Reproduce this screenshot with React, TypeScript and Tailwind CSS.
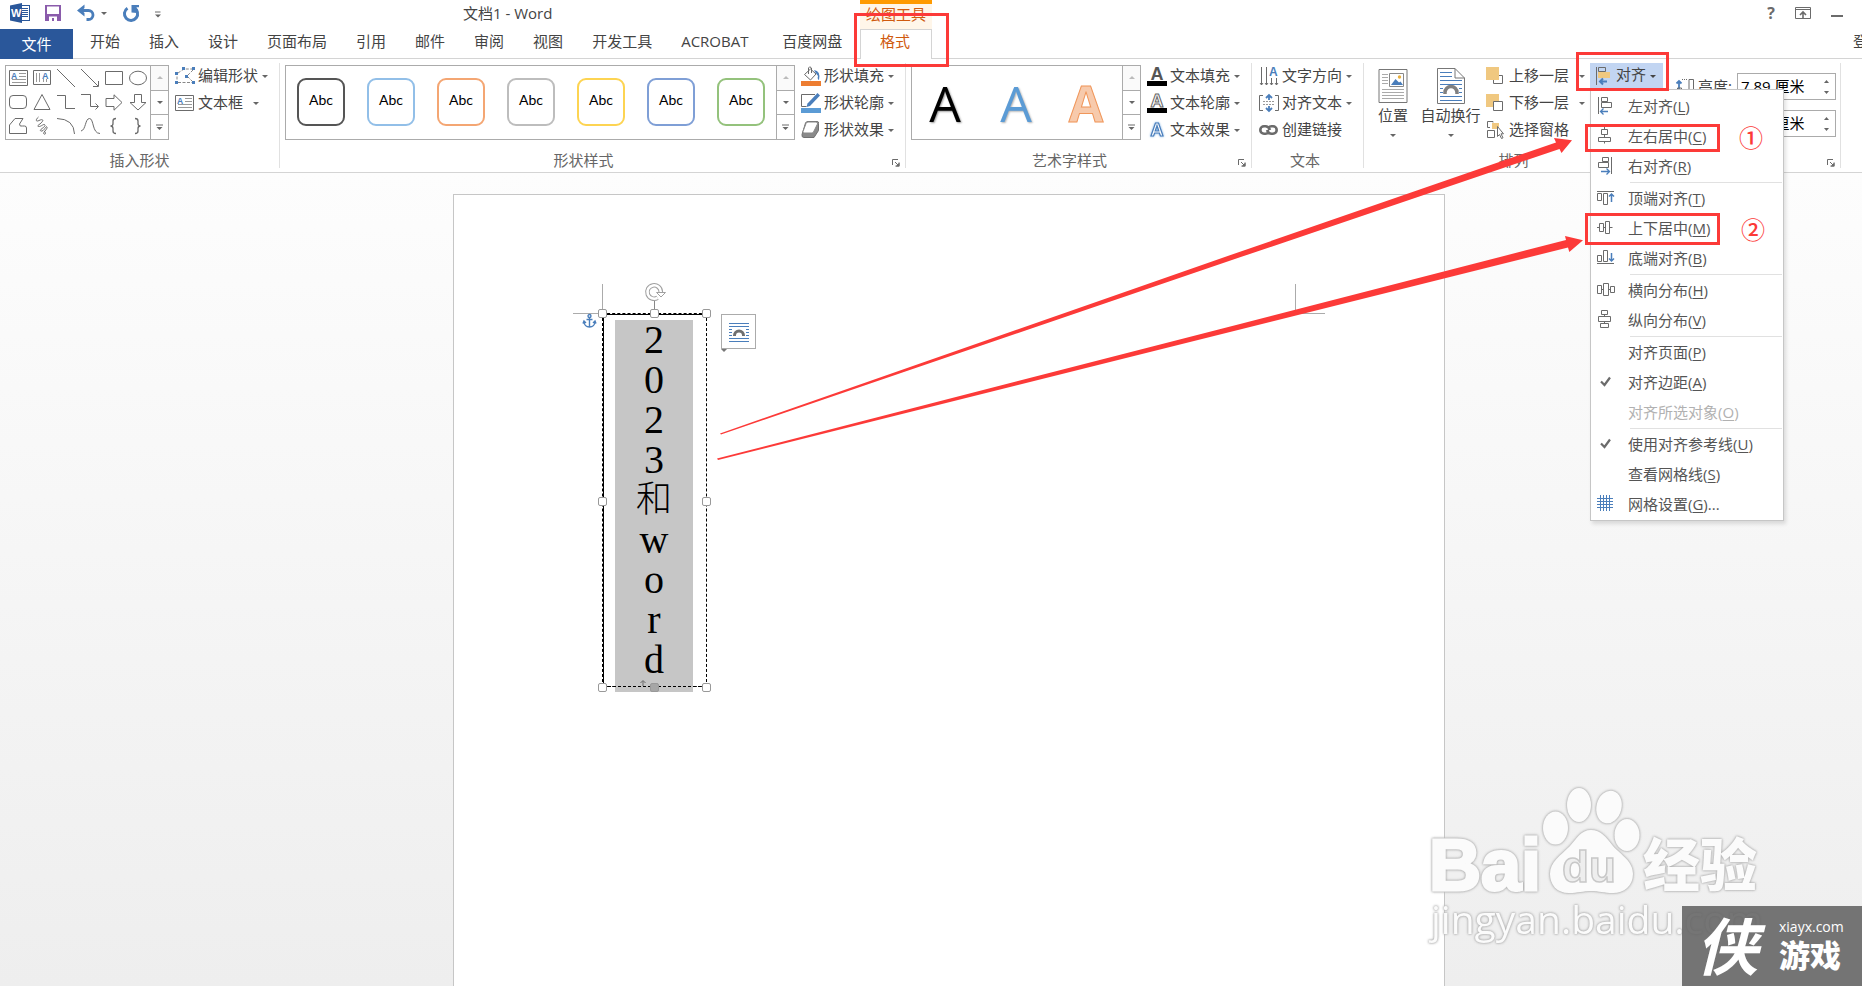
import React from "react";

type Kids = { children?: React.ReactNode };

const BLUE = "#4a7ebb";
const GREY = "#777";

function Icon({ w = 20, h = 20, children }: Kids & { w?: number; h?: number }) {
  return (
    <svg width={w} height={h} viewBox={`0 0 ${w} ${h}`} fill="none" stroke="#6b6b6b" strokeWidth="1" className="shrink-0 overflow-visible" aria-hidden="true">
      {children}
    </svg>
  );
}

function Caret({ color = "#666" }: { color?: string }) {
  return (
    <Icon w={6} h={3}>
      <path d="M0 0h6l-3 3z" fill={color} stroke="none" />
    </Icon>
  );
}

/* ---------- title bar and tabs ---------- */

function TitleBar() {
  return (
    <header className="flex h-[29px] shrink-0">
      <div className="flex w-[463px] shrink-0 items-center pb-[3px] pl-[10px]">
        <Icon w={20} h={20}>
          <rect x="10" y="2.5" width="9.5" height="15" fill="#fff" stroke="#2a579a" />
          <path d="M12 5.5h6M12 7.5h6M12 9.5h6M12 11.5h6M12 13.5h6" stroke="#2a579a" />
          <path d="M0 2.5L12 0v20L0 17.5z" fill="#2a579a" stroke="none" />
          <text x="1" y="14" fontSize="11" fontWeight="700" fontFamily="Liberation Sans, sans-serif" fill="#fff" stroke="none">W</text>
        </Icon>
        <button type="button" aria-label="保存" className="ml-[15px] flex">
          <Icon w={16} h={16}>
            <path d="M0 0h16v16H0z" fill="#8a5bab" stroke="none" />
            <path d="M2 1.5h12V9H2zM4 11.5h8V16H4z" fill="#fff" stroke="none" />
            <path d="M7 13h2v3H7z" fill="#8a5bab" stroke="none" />
          </Icon>
        </button>
        <button type="button" aria-label="撤消" className="ml-[16px] flex items-center gap-[6px]">
          <Icon w={18} h={16}>
            <path d="M3 5.500h8.500a4.500 4.500 0 0 1 0 9H9.500" stroke={BLUE} strokeWidth="2.800" />
            <path d="M7.500 -.5v3.500L5 5.500l2.500 2.500v3.500L0 5.500z" fill={BLUE} stroke="none" />
          </Icon>
          <Caret />
        </button>
        <button type="button" aria-label="重复" className="ml-[16px] flex">
          <Icon w={16} h={17}>
            <path d="M11 2.9A6.6 6.6 0 1 1 4.5 3.2" stroke={BLUE} strokeWidth="3" />
            <path d="M8.5 0H16v2.2h-2.4L14 8 8.5 7.4z" fill={BLUE} stroke="none" />
          </Icon>
        </button>
        <button type="button" aria-label="自定义快速访问工具栏" className="ml-[16px] flex pt-[3px]">
          <Icon w={6} h={7}>
            <path d="M0 1h5.5" />
            <path d="M0 3.5h6l-3 3z" fill="#666" stroke="none" />
          </Icon>
        </button>
      </div>
      <h1 className="w-[397px] shrink-0 whitespace-pre text-[15px] leading-[27px]">文档1 - Word</h1>
      <div className="w-[72px] shrink-0 border-t-4 border-[#ff9a00] bg-[#fff6e9] text-center text-[15px] leading-[20px] text-[#d05a0e]">绘图工具</div>
      <div className="ml-auto flex shrink-0 items-center gap-[20px] pb-[3px] pr-[19px]">
        <button type="button" aria-label="帮助" className="text-[16px] font-bold leading-none text-[#6b6b6b]">?</button>
        <button type="button" aria-label="功能区显示选项" className="flex">
          <Icon w={16} h={12}>
            <path d="M.5.5h15v11H.5zM0 2.5h16" />
            <path d="M8 11V5.500M5 8l3-3 3 3" strokeWidth="1.6" />
          </Icon>
        </button>
        <button type="button" aria-label="最小化" className="flex pt-[5px]">
          <Icon w={12} h={2}><path d="M0 1h12" strokeWidth="2" /></Icon>
        </button>
      </div>
    </header>
  );
}

const tabs = ["开始", "插入", "设计", "页面布局", "引用", "邮件", "审阅", "视图", "开发工具", "ACROBAT", "百度网盘"];

function TabBar() {
  return (
    <nav className="flex h-[30px] shrink-0 text-[15px] leading-[24px]">
      <div className="flex w-[860px] shrink-0 border-b border-[#d4d4d4]">
        <button type="button" className="mb-[-1px] w-[73px] shrink-0 bg-[#2a579a] text-white">文件</button>
        <div className="flex items-start gap-[29px] pl-[17px]">
          {tabs.map((t) => (
            <button type="button" key={t} className={`whitespace-nowrap text-left ${t === "ACROBAT" ? "w-[72px]" : ""}`}>{t}</button>
          ))}
        </div>
      </div>
      <button type="button" className="flex w-[72px] shrink-0 justify-center border-x border-t border-[#d4d4d4] bg-white pr-[2px] leading-[22px] text-[#d05a0e]">格式</button>
      <div className="flex flex-1 items-start justify-end overflow-hidden border-b border-[#d4d4d4]">
        <button type="button" className="w-[9px] overflow-hidden whitespace-nowrap text-left">登录</button>
      </div>
    </nav>
  );
}

/* ---------- ribbon ---------- */

function Group({ label, launcher, width, children }: Kids & { label: string; launcher?: boolean; width: string }) {
  return (
    <section className={`flex h-[105px] shrink-0 flex-col border-r border-[#e1e1e1] ${width}`} aria-label={label}>
      <div className="flex h-[88px] items-start">{children}</div>
      <div className="flex h-[17px] text-[15px] leading-[18px] text-[#666]">
        <span className="flex-1 pr-[5px] text-center">{label}</span>
        {launcher && (
          <button type="button" aria-label={`${label}选项`} className="flex w-[18px] items-center justify-center pt-[6px]">
            <Icon w={8} h={8}>
              <path d="M.5 6V.5H6M3 3l3.5 3.5M7 3.5V7H3.5" />
              <path d="M7.5 3.5v4h-4z" fill="#6b6b6b" stroke="none" />
            </Icon>
          </button>
        )}
      </div>
    </section>
  );
}

function Scroller() {
  return (
    <div className="flex w-[18px] shrink-0 flex-col border-l border-[#ababab]">
      <button type="button" aria-label="上一行" className="flex flex-1 items-center justify-center bg-[#fafafa]">
        <Icon w={6} h={3}><path d="M0 3h6L3 0z" fill="#bbb" stroke="none" /></Icon>
      </button>
      <button type="button" aria-label="下一行" className="flex flex-1 items-center justify-center border-y border-[#ababab]"><Caret /></button>
      <button type="button" aria-label="其他" className="flex flex-1 items-center justify-center">
        <Icon w={7} h={7}>
          <path d="M0 1h7" />
          <path d="M.5 3h6l-3 3z" fill="#666" stroke="none" />
        </Icon>
      </button>
    </div>
  );
}

function Gallery({ children, width }: Kids & { width: string }) {
  return (
    <div className={`mt-[2px] flex h-[75px] shrink-0 border border-[#ababab] bg-white ${width}`}>
      <div className="flex-1">{children}</div>
      <Scroller />
    </div>
  );
}

function Small({ icon, label, caret = true, gap = "ml-[4px]" }: { icon: React.ReactNode; label: string; caret?: boolean; gap?: string }) {
  return (
    <button type="button" className="flex h-[27px] items-center whitespace-nowrap pb-px text-[15px] leading-[20px]">
      <span className="mr-[3px] flex w-[20px] items-center">{icon}</span>
      <span className="pb-[3px]">{label}</span>
      {caret && <span className={`flex ${gap}`}><Caret /></span>}
    </button>
  );
}

const textBoxIcon = (
  <Icon w={19} h={16}>
    <path d="M.5.5h18v15H.5z" />
    <path d="M10 3.5h7M10 6.5h7M3 9.5h14M3 12.5h14" stroke="#999" />
    <text x="2" y="8.5" fontSize="8.5" fontWeight="700" fontFamily="Liberation Sans, sans-serif" fill={BLUE} stroke="none">A</text>
  </Icon>
);

const shapes: { name: string; art: React.ReactNode }[] = [
  { name: "文本框", art: textBoxIcon },
  {
    name: "竖排文本框",
    art: (
      <Icon w={18} h={16}>
        <path d="M.5.5h17v14H.5z" />
        <path d="M3.5 3v9M6.5 3v9M10.5 9v3M13.5 9v3" stroke="#999" />
        <text x="9" y="8.5" fontSize="9" fontWeight="700" fontFamily="Liberation Sans, sans-serif" fill={BLUE} stroke="none">A</text>
      </Icon>
    ),
  },
  { name: "直线", art: <Icon w={18} h={18}><path d="M0 0l18 18" /></Icon> },
  { name: "箭头", art: <Icon w={18} h={18}><path d="M0 0l17 17M17.500 12v5.500H12" /></Icon> },
  { name: "矩形", art: <Icon w={18} h={14}><path d="M.5.5h17v13H.5z" /></Icon> },
  { name: "椭圆", art: <Icon w={18} h={14}><ellipse cx="9" cy="7" rx="8.5" ry="6.8" /></Icon> },
  { name: "圆角矩形", art: <Icon w={18} h={14}><rect x=".5" y=".5" width="17" height="13" rx="3.5" /></Icon> },
  { name: "三角形", art: <Icon w={18} h={16}><path d="M9 .5l8 15H1z" /></Icon> },
  { name: "肘形连接符", art: <Icon w={18} h={14}><path d="M0 .5h8.500v13H18" /></Icon> },
  { name: "肘形箭头", art: <Icon w={18} h={16}><path d="M0 .5h9.500v12H17M14.500 9.500l3 3-3 3" /></Icon> },
  { name: "右箭头", art: <Icon w={18} h={17}><path d="M1 4.500h8V.8l8 7.700-8 7.700v-3.700H1z" /></Icon> },
  { name: "下箭头", art: <Icon w={18} h={17}><path d="M5.500.5h7v8h4.500L9 16 1 8.500h4.500z" /></Icon> },
  { name: "任意多边形", art: <Icon w={18} h={16}><path d="M.5 7L6 .5h8L10.500 6q0 3 3 2h2q2 0 2 2v5.500H.5z" /></Icon> },
  { name: "自由曲线", art: <Icon w={18} h={18}><path d="M5.500 0C2 3 3 5 6 3.500s5-1 3 1.500-6 4-3.500 4.500S11 6 12 8s-7 5-4 6 5-6 6-4-5 6-3 7 2-2 0-3" /></Icon> },
  { name: "弧形", art: <Icon w={18} h={16}><path d="M0 .5Q17 1 17.500 16" /></Icon> },
  { name: "曲线", art: <Icon w={19} h={16}><path d="M0 13C5 12 4 .5 8.500.5S11 15.500 19 15.500" /></Icon> },
  { name: "左大括号", art: <Icon w={18} h={16}><path d="M11 .5Q8 .5 8 3v2.500Q8 8 5.500 8 8 8 8 10.500V13q0 2.500 3 2.500" strokeWidth="1.300" /></Icon> },
  { name: "右大括号", art: <Icon w={18} h={16}><path d="M6 .5Q9 .5 9 3v2.500Q9 8 11.500 8 9 8 9 10.500V13q0 2.500-3 2.500" strokeWidth="1.300" /></Icon> },
];

const styleBorders = [
  "border-[#555555]",
  "border-[#92bfe8]",
  "border-[#f4a673]",
  "border-[#bdbdbd]",
  "border-[#fdd452]",
  "border-[#7f9fd6]",
  "border-[#94c27c]",
];

const letterA = (fill: string, stroke: string, sw: number) => (
  <text x="10" y="14" textAnchor="middle" fontSize="18" fontWeight="700" fontFamily="Liberation Sans, sans-serif" fill={fill} stroke={stroke} strokeWidth={sw}>A</text>
);

const fillIcon = (
  <Icon>
    <path d="M3.500 8.500L9.500 3l5.500 5-5.500 6z" fill="#fff" />
    <path d="M7.500 8V2Q8.500-.5 10.500 2v5" />
    <path d="M13 4q7 1 5 10-2-1-1-4l-3-4z" fill={BLUE} stroke="none" />
    <path d="M0 15h20v5H0z" fill="#ed7d31" stroke="none" />
  </Icon>
);
const outlineIcon = (
  <Icon>
    <path d="M14 1.500H.5v12h5" />
    <path d="M16.500 0l2.500 2.500L9 13l-3.500 1L6.500 10.500z" fill={BLUE} stroke="none" />
    <path d="M0 15h20v5H0z" fill="#5b9bd5" stroke="none" />
  </Icon>
);
const effectIcon = (
  <Icon w={20} h={18}>
    <path d="M4.500 2Q5 .5 7 .5h9q2 0 1.500 2v7L13 16.500H3q-2.500 0-2-3z" fill="#8a8a8a" stroke="#707070" />
    <path d="M5 2.500Q5.500 1 7 1h8q2 0 1.500 2L12.500 11Q12 12 11 12H3Q1.500 12 2 10.500z" fill="#fff" stroke="#888" />
  </Icon>
);
const textFillIcon = <Icon>{letterA("#555", "none", 0)}<path d="M0 15h20v5H0z" fill="#000" stroke="none" /></Icon>;
const textOutlineIcon = <Icon>{letterA("#fff", "#666", 1)}<path d="M0 15h20v5H0z" fill="#000" stroke="none" /></Icon>;
const textEffectIcon = (
  <Icon>
    <text x="10" y="16" textAnchor="middle" fontSize="18" fontWeight="700" fontFamily="Liberation Sans, sans-serif" fill="#fff" stroke={BLUE} strokeWidth="1.200" className="[filter:drop-shadow(0_0_1px_#7fb2e5)]">A</text>
  </Icon>
);
const directionIcon = (
  <Icon w={19} h={20}>
    <path d="M2.500 1v18M7.500 1v18M12.500 12v7M17.500 12v7M1 17l1.500 2L4 17M6 17l1.500 2L9 17M11 17l1.500 2 1.500-2M16 17l1.500 2 1.500-2" />
    <text x="10" y="10" fontSize="12" fontWeight="700" fontFamily="Liberation Sans, sans-serif" fill={BLUE} stroke="none">A</text>
  </Icon>
);
const alignTextIcon = (
  <Icon w={20} h={18}>
    <path d="M4 1.500H.5v15H4M16 1.500h3.500v15H16" />
    <path d="M4 7.500h12M4 10.500h12" stroke="#999" strokeDasharray="2 1" />
    <path d="M10 1v5M7 4l3-3 3 3M10 12v5M7 14l3 3 3-3" stroke={BLUE} strokeWidth="1.800" />
  </Icon>
);
const linkIcon = (
  <Icon w={19} h={12}>
    <path d="M9.500 8.500Q8.500 9.700 6.500 9.700H5a3.700 3.700 0 0 1 0-7.400h1.500q3 0 4.500 3.700M9.500 3.500Q10.500 2.300 12.500 2.300H14a3.700 3.700 0 0 1 0 7.400h-1.500Q9.500 9.700 8 6" strokeWidth="2.600" />
  </Icon>
);
const editShapeIcon = (
  <Icon w={20} h={18}>
    <path d="M3 6L9 2h9M2 5v10M3 15.500h15M18 3l-6 6 6 6" stroke="#888" strokeDasharray="3 1.500" />
    <path d="M7 0h3v3H7zM17 0h3v3h-3zM0 5h3v3H0zM10 8h3v3h-3zM0 14h3v3H0zM17 14h3v3h-3z" fill={BLUE} stroke="none" />
  </Icon>
);
const forwardIcon = (
  <Icon w={18} h={18}>
    <path d="M12.500 8.500h4v8h-9v-4" />
    <path d="M0 0h13v13H0z" fill="#f0c880" stroke="none" />
  </Icon>
);
const backwardIcon = (
  <Icon w={18} h={18}>
    <path d="M0 0h13v13H0z" fill="#f0c880" stroke="none" />
    <path d="M7.500 7.500h9v9h-9z" fill="#fff" />
  </Icon>
);
const paneIcon = (
  <Icon w={18} h={18}>
    <path d="M6 2h7v6H6z" fill="#f0c880" stroke="none" />
    <path d="M7 1.500V.5H1.500v6H4M1.500 9.500h7v7h-7z" />
    <path d="M11.500 5.500v10l2-2 2 4 1.500-.7-2-4h2.500z" fill="#fff" />
  </Icon>
);

function Big({ icon, label, width }: { icon: React.ReactNode; label: string; width: string }) {
  return (
    <button type="button" className={`flex shrink-0 flex-col items-center pt-[3px] text-[15px] leading-[20px] ${width}`}>
      <span className="flex h-[39px] items-center">{icon}</span>
      <span className="whitespace-nowrap">{label}</span>
      <span className="flex pt-[9px]"><Caret /></span>
    </button>
  );
}

const positionIcon = (
  <Icon w={30} h={34}>
    <path d="M1 .5h28v33H1z" stroke={GREY} />
    <path d="M4 5.500h6M4 8.500h6M4 11.500h6M4 14.500h6M4 20.500h22M4 23.500h22M4 26.500h22M4 29.500h22" stroke="#aaa" />
    <path d="M11.500 4.500h14v13h-14z" stroke="#888" />
    <path d="M13 16l4.500-6 3.500 3.500 1.500-1L25 16z" fill={BLUE} stroke="none" />
    <circle cx="21.500" cy="8" r="1.700" fill="#e8b040" stroke="none" />
  </Icon>
);
const wrapIcon = (
  <Icon w={28} h={36}>
    <path d="M.5.5H18L27.500 10v25.500H.5zM18 .5V10h9.500" stroke={GREY} />
    <path d="M3 4.500h12M3 8.500h12M3 12.500h22M3 16.500h22M3 20.500h3M22 20.500h3M3 24.500h3M22 24.500h3M3 28.500h22M3 32.500h22" stroke={BLUE} />
    <path d="M8 26v-1.500a6 6 0 0 1 12 0V26" stroke="#808080" strokeWidth="3.500" />
  </Icon>
);

function Measure({ id, label, value, icon }: { id: string; label: string; value: string; icon: React.ReactNode }) {
  return (
    <div className="flex h-[27px] items-center text-[15px]">
      <span className="flex w-[22px] pb-[4px]">{icon}</span>
      <label htmlFor={id} className="w-[39px] pb-px">{label}</label>
      <div className="flex h-[27px] w-[99px] border border-[#ababab] bg-white">
        <input id={id} defaultValue={value} className="w-[79px] bg-transparent pl-[3px] text-[15px] text-black outline-none" />
        <div className="flex flex-1 flex-col items-center justify-center gap-[8px] pl-[1px]">
          <button type="button" aria-label={`增加${label}`} className="flex"><Icon w={5} h={3}><path d="M0 3h5L2.500 0z" fill="#666" stroke="none" /></Icon></button>
          <button type="button" aria-label={`减少${label}`} className="flex"><Icon w={5} h={3}><path d="M0 0h5L2.500 3z" fill="#666" stroke="none" /></Icon></button>
        </div>
      </div>
    </div>
  );
}

/* ---------- align menu ---------- */

const arrowLeft = <path d="M11 14.500H3.500M6.500 11.500l-3 3 3 3" stroke={BLUE} strokeWidth="1.300" />;
const art: Record<string, React.ReactNode> = {
  left: <><path d="M1.500 0v17M4.500.5h6v4h-6zM4.500 5.500h10v5h-10z" />{arrowLeft}</>,
  center: <path d="M7.500 0v2M4.500 2.500h6v5h-6zM7.500 7.500v3M1.500 10.500h12v4h-12zM7.500 14.500v2" />,
  right: <><path d="M14.500 0v17M5.500.5h6v4h-6zM1.500 5.500h10v5h-10z" /><path d="M4 14.500h8.500M9.500 11.500l3 3-3 3" stroke={BLUE} strokeWidth="1.300" /></>,
  top: <><path d="M0 2.500h17M.5 4.500h4v7h-4zM6.500 4.500h4v11h-4z" /><path d="M14.500 13V5M12 7.500L14.500 5 17 7.500" stroke={BLUE} strokeWidth="1.500" /></>,
  middle: <path d="M0 8.500h2M2.500 4.500h4v8h-4zM6.500 8.500h2M8.500 2.500h4v12h-4zM12.500 8.500h3" />,
  bottom: <><path d="M0 14.500h17M.5 6.500h4v6h-4zM6.500 1.500h4v11h-4z" /><path d="M14.500 4v8M12 9.500l2.500 2.500L17 9.500" stroke={BLUE} strokeWidth="1.500" /></>,
  horizontal: <path d="M.5 4.500h4v8h-4zM4.500 8.500h2M6.500 2.500h5v12h-5zM11.500 8.500h2M13.500 5.500h4v6h-4z" />,
  vertical: <path d="M4.500-.5h6v4h-6zM7.500 3.500v2M1.500 5.500h12v5h-12zM7.500 10.500v2M3.500 12.500h8v4h-8z" />,
  check: <path d="M4 8.500l3.500 3.500L13 4.500" strokeWidth="2.200" />,
  grid: <path d="M3.500 0v16M6.500 0v16M9.500 0v16M12.500 0v16M0 3.500h16M0 6.500h16M0 9.500h16M0 12.500h16" stroke={BLUE} />,
};

type Item = { text: string; k: string; icon?: string; tail?: string; off?: boolean };
const menu: Item[][] = [
  [{ text: "左对齐", k: "L", icon: "left" }, { text: "左右居中", k: "C", icon: "center" }, { text: "右对齐", k: "R", icon: "right" }],
  [{ text: "顶端对齐", k: "T", icon: "top" }, { text: "上下居中", k: "M", icon: "middle" }, { text: "底端对齐", k: "B", icon: "bottom" }],
  [{ text: "横向分布", k: "H", icon: "horizontal" }, { text: "纵向分布", k: "V", icon: "vertical" }],
  [{ text: "对齐页面", k: "P" }, { text: "对齐边距", k: "A", icon: "check" }, { text: "对齐所选对象", k: "O", off: true }],
  [{ text: "使用对齐参考线", k: "U", icon: "check" }, { text: "查看网格线", k: "S" }, { text: "网格设置", k: "G", icon: "grid", tail: "..." }],
];

function AlignMenu() {
  return (
    <div role="menu" className="absolute left-0 top-full z-20 w-[194px] border border-[#c6c6c6] bg-white pt-[2px] shadow-[2px_3px_4px_rgba(0,0,0,0.12)]">
      {menu.map((section, i) => (
        <React.Fragment key={i}>
          {i > 0 && <hr className="mb-px ml-[39px] mr-px h-px border-0 bg-[#e1e1e1]" />}
          {section.map((item) => (
            <button
              type="button"
              role="menuitem"
              key={item.k}
              disabled={item.off}
              className={`flex h-[30px] w-full items-center whitespace-nowrap text-[15px] ${item.off ? "text-[#b1b1b1]" : "text-[#555]"}`}
            >
              <span className="flex w-[37px] pb-[4px] pl-[6px]">{item.icon && <Icon w={17} h={17}>{art[item.icon]}</Icon>}</span>
              <span className="pb-[2px]">{item.text}(<span className="underline underline-offset-2">{item.k}</span>){item.tail}</span>
            </button>
          ))}
        </React.Fragment>
      ))}
    </div>
  );
}

function Ribbon() {
  return (
    <div className="flex shrink-0 border-b border-[#d4d4d4] py-[4px]">
      <Group label="插入形状" width="w-[280px] pl-[5px]">
        <Gallery width="w-[164px]">
          <div className="grid grid-cols-6 grid-rows-3">
            {shapes.map((s) => (
              <button type="button" key={s.name} aria-label={s.name} className="flex h-[24px] items-center justify-center">{s.art}</button>
            ))}
          </div>
        </Gallery>
        <div className="ml-[6px]">
          <Small icon={editShapeIcon} label="编辑形状" />
          <Small icon={textBoxIcon} label="文本框" gap="ml-[10px]" />
        </div>
      </Group>

      <Group label="形状样式" width="w-[626px] pl-[5px]" launcher>
        <Gallery width="w-[510px]">
          <div className="flex gap-[22px] pl-[11px] pt-[12px]">
            {styleBorders.map((b) => (
              <button type="button" key={b} className={`h-[48px] w-[48px] rounded-[9px] border-2 pb-[6px] font-[Lato] text-[14px] text-black ${b}`}>Abc</button>
            ))}
          </div>
        </Gallery>
        <div className="ml-[6px]">
          <Small icon={fillIcon} label="形状填充" />
          <Small icon={outlineIcon} label="形状轮廓" />
          <Small icon={effectIcon} label="形状效果" />
        </div>
      </Group>

      <Group label="艺术字样式" width="w-[346px] pl-[5px]" launcher>
        <Gallery width="w-[230px]">
          <div className="flex h-full items-center font-[Open_Sans] text-[50px] leading-[70px]">
            <button type="button" className="w-[66px] font-medium text-black [text-shadow:1px_1px_2px_rgba(0,0,0,0.4)]">A</button>
            <button type="button" className="w-[76px] font-medium text-[#5b9bd5] [text-shadow:1px_1px_2px_rgba(0,0,0,0.3)]">A</button>
            <button type="button" className="w-[64px] font-bold text-[#f7caac] [-webkit-text-stroke:1px_#f0965a]">A</button>
          </div>
        </Gallery>
        <div className="ml-[6px]">
          <Small icon={textFillIcon} label="文本填充" />
          <Small icon={textOutlineIcon} label="文本轮廓" />
          <Small icon={textEffectIcon} label="文本效果" />
        </div>
      </Group>

      <Group label="文本" width="w-[112px]">
        <div className="ml-[7px]">
          <Small icon={directionIcon} label="文字方向" />
          <Small icon={alignTextIcon} label="对齐文本" />
          <Small icon={linkIcon} label="创建链接" caret={false} />
        </div>
      </Group>

      <Group label="排列" width="w-[305px]">
        <div className="flex pl-[8px]">
          <Big icon={positionIcon} label="位置" width="w-[42px]" />
          <Big icon={wrapIcon} label="自动换行" width="ml-[3px] w-[67px]" />
        </div>
        <div className="ml-[2px] w-[104px] shrink-0">
          <Small icon={forwardIcon} label="上移一层" gap="ml-[10px]" />
          <Small icon={backwardIcon} label="下移一层" gap="ml-[10px]" />
          <Small icon={paneIcon} label="选择窗格" caret={false} />
        </div>
        <div className="relative">
          <button type="button" aria-haspopup="menu" aria-expanded="true" className="flex h-[26px] w-[73px] items-center bg-[#c2d5f2] pl-[6px] text-[15px]">
            <Icon w={15} h={18}>
              <path d="M.5 0v18M2.500.5h7v4h-7z" />
              <path d="M2 5h12v6H2z" fill="#f0c880" stroke="none" />
              <path d="M11 14.500H4M7 11.500l-3 3 3 3" stroke={BLUE} strokeWidth="2" />
            </Icon>
            <span className="ml-[5px] mr-[4px] pb-[3px]">对齐</span>
            <Caret color="#444" />
          </button>
          <AlignMenu />
        </div>
      </Group>

      <Group label="大小" width="w-[172px]" launcher>
        <div className="flex flex-col gap-[10px] pl-[7px] pt-[10px]">
          <Measure id="shape-height" label="高度:" value="7.89 厘米" icon={
            <Icon w={18} h={18}>
              <path d="M3 13V5M.5 7.500L3 5l2.500 2.500" stroke={BLUE} strokeWidth="1.800" />
              <path d="M6 3.500h6" strokeDasharray="1 1" />
              <path d="M13 3.500h4.500V18H13zM1.500 12h4v5h-4z" />
            </Icon>
          } />
          <Measure id="shape-width" label="宽度:" value="2.16 厘米" icon={<Icon w={18} h={18}><path d="M.5 6.500h4v4h-4zM.5 13h17v4.500H.5z" /></Icon>} />
        </div>
      </Group>
    </div>
  );
}

/* ---------- document ---------- */

const handles = [
  "left-[-5px] top-[-5px] bg-white",
  "left-[47px] top-[-5px] bg-white",
  "left-[99px] top-[-5px] bg-white",
  "left-[-5px] top-[183px] bg-white",
  "left-[99px] top-[183px] bg-white",
  "left-[-5px] top-[369px] bg-white",
  "left-[47px] top-[369px] bg-[#a6a6a6]",
  "left-[99px] top-[369px] bg-white",
];

function TextBox() {
  return (
    <div className="absolute left-[148px] top-[118px] h-[374px] w-[105px] border border-dashed border-black shadow-[inset_1px_1px_0_#000]">
      <div className="absolute left-[12px] top-[6px] h-[372px] w-[78px] bg-[#c6c6c6] text-center font-['Liberation_Serif','Noto_Sans_CJK_SC',serif] text-[40px] leading-[40px] text-black">
        {["2", "0", "2", "3", "和", "w", "o", "r", "d"].map((c, i) => (
          <div key={i} className={c === "和" ? "h-[40px] text-[36px] font-light" : "h-[40px]"}>{c}</div>
        ))}
      </div>
      <span className="absolute left-0 right-0 top-[372px] border-t border-dashed border-black" />
      {handles.map((h) => (
        <span key={h} className={`absolute h-[9px] w-[9px] rounded-[2px] border border-[#999] ${h}`} />
      ))}
      <span className="absolute left-[51px] top-[-13px] h-[8px] w-px bg-[#888]" />
      <span className="absolute left-[42px] top-[-31px]">
        <Icon w={20} h={20}>
          <path d="M12.500 14.800A6.700 6.700 0 1 1 15.800 9" stroke="#a0a0a0" strokeWidth="4.600" />
          <path d="M12.500 14.800A6.700 6.700 0 1 1 15.800 9" stroke="#fff" strokeWidth="2.600" />
          <path d="M11.500 9.500h9L16 14z" fill="#fff" stroke="#a0a0a0" />
        </Icon>
      </span>
      <span className="absolute left-[-20px] top-0">
        <Icon w={13} h={14}>
          <g stroke={BLUE} strokeWidth="1.400">
            <circle cx="6.500" cy="2" r="1.500" />
            <path d="M6.500 3.500V13M3.500 5.500h6M.8 7.500Q1.500 13 6.500 13t5.700-5.500M0 9.500l1-2.500 2 2M13 9.500L12 7l-2 2" />
          </g>
        </Icon>
      </span>
      <span className="absolute left-[37px] top-[366px]">
        <Icon w={6} h={6}><path d="M3 6V1M.5 3L3 .5 5.500 3" /></Icon>
      </span>
      <button type="button" aria-label="布局选项" className="absolute left-[118px] top-0 flex h-[35px] w-[35px] items-center justify-center border border-[#ababab] bg-white">
        <Icon w={20} h={20}>
          <path d="M0 1.500h20M0 4.500h20M0 7.500h3M17 7.500h3M0 10.500h3M17 10.500h3M0 13.500h3M17 13.500h3M0 16.500h20M0 19.500h20" stroke={BLUE} />
          <path d="M5.500 14v-.5a4.500 4.500 0 0 1 9 0v.5" stroke="#707070" strokeWidth="3" />
        </Icon>
      </button>
      <span className="absolute left-[118px] top-[35px]"><Icon w={6} h={3}><path d="M0 0h6L3 3z" fill="#777" stroke="none" /></Icon></span>
    </div>
  );
}

function Watermark() {
  return (
    <div className="pointer-events-none absolute bottom-0 right-0 h-[226px] w-[462px]">
      <svg viewBox="0 0 462 226" className="h-full w-full [filter:drop-shadow(0_0_1px_#aaa)_drop-shadow(0_0_1px_#c4c4c4)]" fill="#fbfbfb">
        <text x="29" y="130" fontSize="72" fontWeight="700" fontFamily="Liberation Sans, sans-serif" stroke="#fbfbfb" strokeWidth="3">Bai</text>
        <ellipse cx="155.500" cy="68" rx="12.500" ry="16.500" />
        <ellipse cx="179" cy="45" rx="12" ry="17" />
        <ellipse cx="209" cy="47" rx="12.500" ry="16.500" transform="rotate(14 209 47)" />
        <ellipse cx="227" cy="75" rx="12.500" ry="16" />
        <path d="M191 70c10 0 15 7 22 16 8 9 20 15 20 28 0 12-9 19-20 19-9 0-14-2-22-2s-13 2-22 2c-12 0-19-8-19-19 0-12 10-18 20-28 7-8 11-16 21-16z" />
        <text x="162" y="122" fontSize="44" fontWeight="700" fontFamily="Liberation Sans, sans-serif" fill="#eeeeee" stroke="#c8c8c8" strokeWidth="1.500">du</text>
        <text x="243" y="126" fontSize="57" fontWeight="900" fontFamily="Noto Sans CJK SC, sans-serif">经验</text>
        <text x="31" y="174" fontSize="39" fontFamily="Open Sans, sans-serif">jingyan.baidu.com</text>
      </svg>
      <div className="absolute bottom-0 right-0 flex h-[80px] w-[180px] items-center bg-[#666]/90 text-white">
        <span className="ml-[14px] w-[76px] text-[62px] font-bold italic leading-[76px]">侠</span>
        <span className="ml-[7px] mt-[-4px] flex flex-col">
          <span className="text-[14px] leading-[22px]">xiayx.com</span>
          <span className="text-[31px] font-black leading-[34px]">游戏</span>
        </span>
      </div>
    </div>
  );
}

function Annotations() {
  const frame = "absolute border-[3px] border-[#fc3a38]";
  const num = "absolute font-['Noto_Sans_CJK_SC',sans-serif] text-[24px] font-medium leading-[24px] text-[#fc3a38]";
  return (
    <div className="pointer-events-none absolute left-0 top-0 z-30">
      <span className={`${frame} left-[854px] top-[13px] h-[54px] w-[95px]`} />
      <span className={`${frame} left-[1576px] top-[52px] h-[39px] w-[93px]`} />
      <span className={`${frame} left-[1585px] top-[124px] h-[28px] w-[135px]`} />
      <span className={`${frame} left-[1585px] top-[213px] h-[32px] w-[135px]`} />
      <span className={`${num} left-[1739px] top-[125px]`}>①</span>
      <span className={`${num} left-[1741px] top-[217px]`}>②</span>
      <svg width="1600" height="500" className="absolute left-0 top-0 max-w-none" fill="#fc3a38" aria-hidden="true">
        <path d="M720 433.500L1240 251.700 1556 142.500 1554 138 1572 140.300 1561.500 153 1559.500 149 1240 257.300 721 434.500z" />
        <path d="M717 458.500L1240 324 1566 240 1565 236 1583 240.300 1569.300 252 1568 247.500 1240 329.500 718 460z" />
      </svg>
    </div>
  );
}

export default function App() {
  return (
    <div className="relative flex h-screen flex-col overflow-hidden bg-white font-['Open_Sans','Noto_Sans_CJK_SC',sans-serif] text-[#444]">
      <TitleBar />
      <TabBar />
      <Ribbon />
      <main className="flex flex-1 justify-center bg-linear-to-b from-[#fdfdfd] to-[#eeeeee] pl-[36px] pt-[21px]">
        <article className="relative w-[992px] shrink-0 border-x border-t border-[#c6c6c6] bg-white">
          <span className="absolute left-[148px] top-[89px] h-[30px] w-px bg-[#ababab]" />
          <span className="absolute left-[119px] top-[118px] h-px w-[30px] bg-[#ababab]" />
          <span className="absolute left-[841px] top-[89px] h-[30px] w-px bg-[#ababab]" />
          <span className="absolute left-[841px] top-[118px] h-px w-[30px] bg-[#ababab]" />
          <TextBox />
        </article>
      </main>
      <Watermark />
      <Annotations />
    </div>
  );
}
